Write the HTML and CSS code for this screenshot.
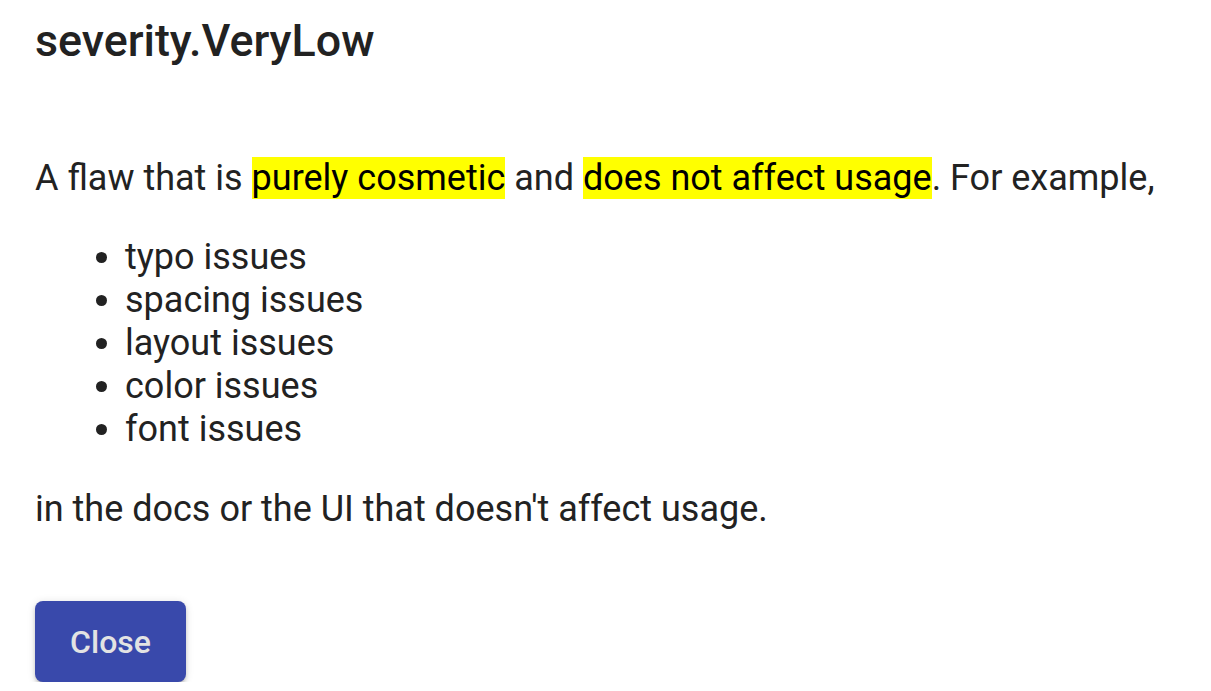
FILE: index.html
```html
<!DOCTYPE html>
<html>
<head>
<meta charset="utf-8">
<link rel="stylesheet" href="styles.css">
</head>
<body>
<div class="dialog">
  <h2 class="title">severity.VeryLow</h2>
  <div class="content">
    <p>A flaw that is <mark>purely cosmetic</mark> and <mark>does not affect usage</mark>. For example,</p>
    <ul>
      <li>typo issues</li>
      <li>spacing issues</li>
      <li>layout issues</li>
      <li>color issues</li>
      <li>font issues</li>
    </ul>
    <p>in the docs or the UI that doesn't affect usage.</p>
  </div>
  <div class="actions">
    <button class="btn">Close</button>
  </div>
</div>
</body>
</html>
```
FILE: styles.css
```css
html, body {
  margin: 0;
  padding: 0;
  background: #ffffff;
}
body {
  font-family: Roboto, "Liberation Sans", sans-serif;
  color: #222222;
}
.dialog {
  padding: 0 20px 0 35px;
}
.title {
  margin: 0;
  padding-top: 15px;
  font-size: 44.8px;
  font-weight: 500;
  line-height: 52px;
  color: #222222;
}
.content {
  font-size: 36px;
  line-height: 43px;
  padding-top: 90px;
}
.content p {
  margin: 0;
}
mark {
  background: #ffff00;
  color: #000;
}
ul {
  margin: 36px 0 37px;
  padding-left: 90px;
}
.actions {
  padding-top: 70px;
}
.btn {
  display: block;
  width: 151px;
  height: 81px;
  border: none;
  border-radius: 8px;
  background: #3949ab;
  color: #e3e3e3;
  font-family: Roboto, "Liberation Sans", sans-serif;
  font-weight: 500;
  font-size: 32px;
  box-shadow: 0 3px 3px -2px rgba(0,0,0,.2), 0 3px 4px 0 rgba(0,0,0,.14), 0 1px 8px 0 rgba(0,0,0,.12);
}
```
